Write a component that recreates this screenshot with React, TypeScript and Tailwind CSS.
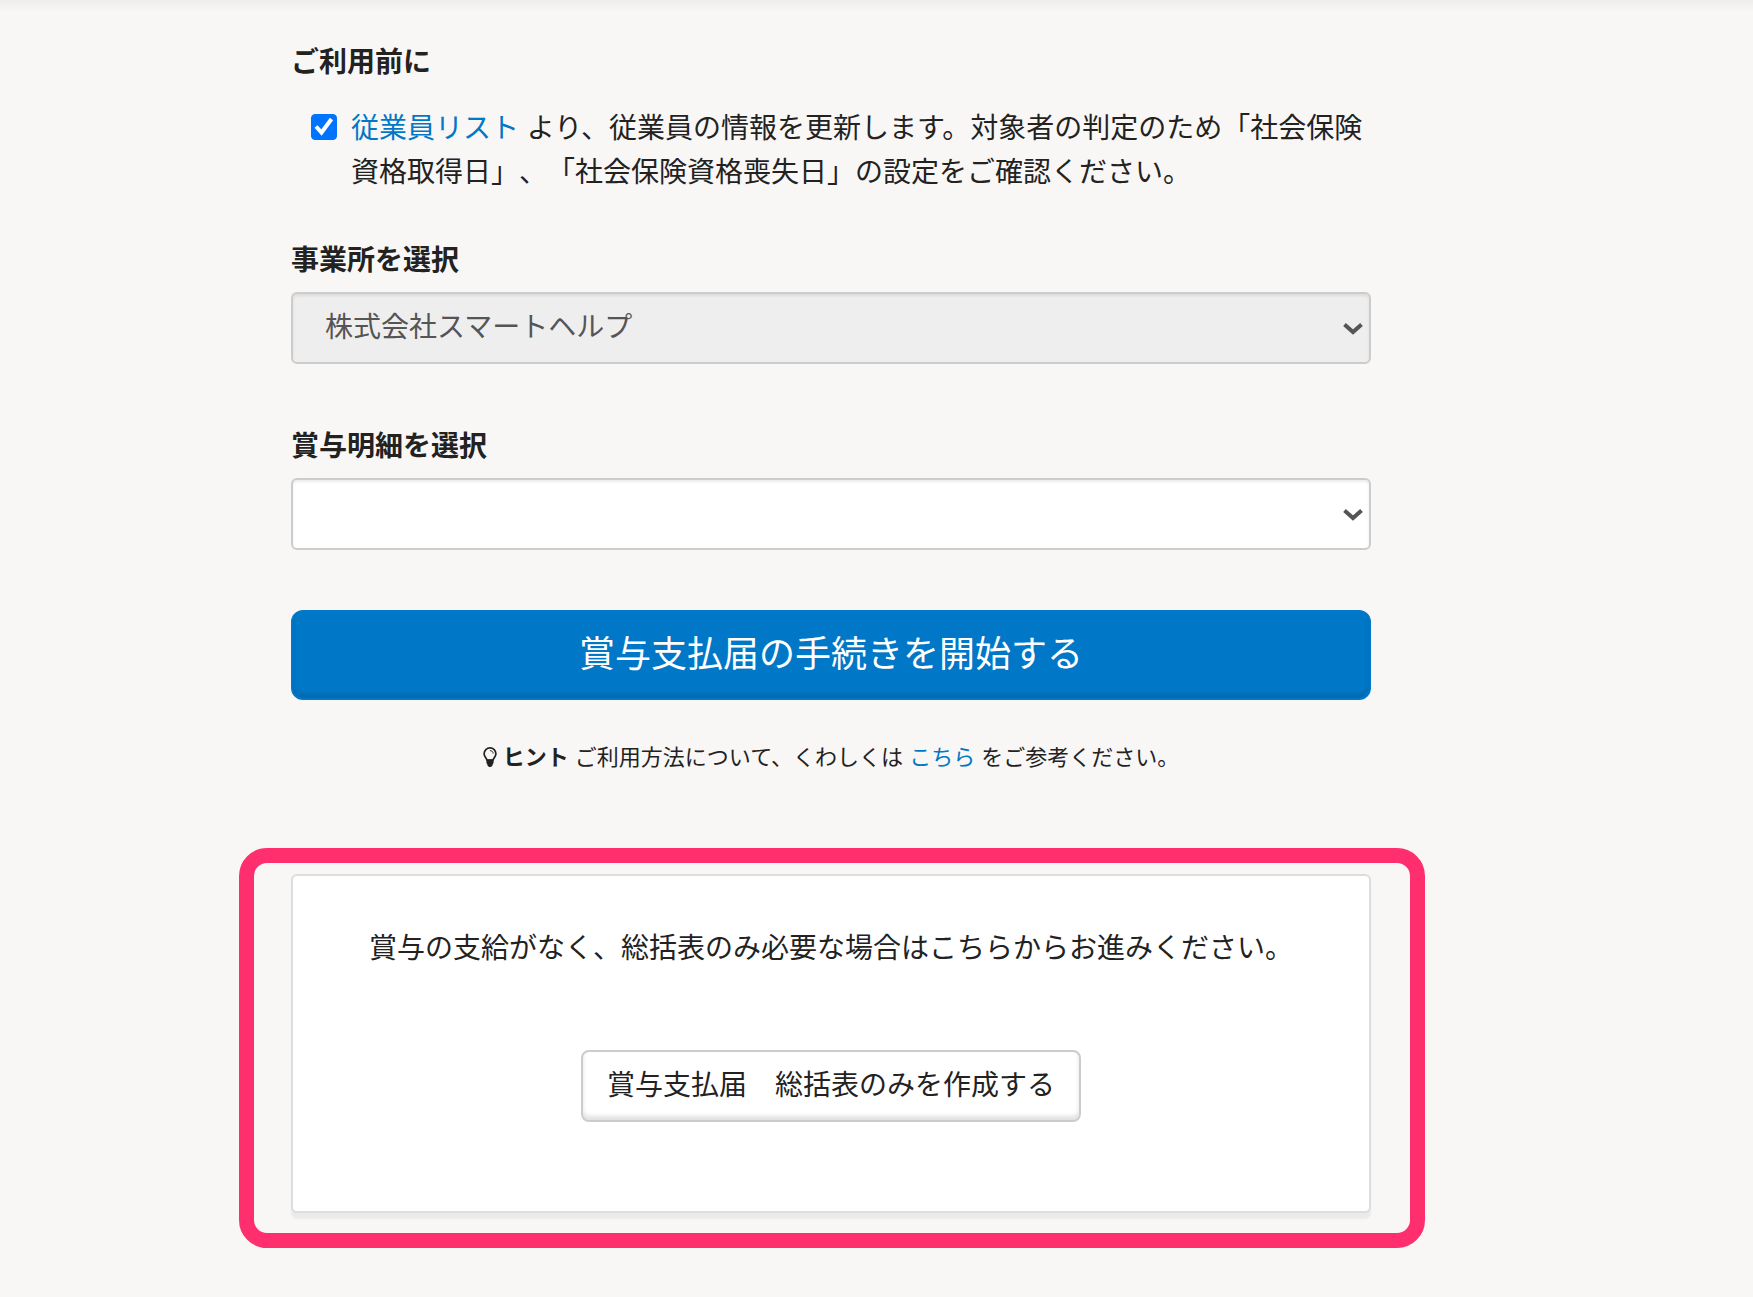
import React, { useState } from "react";

function Chevron() {
  return (
    <svg
      className="pointer-events-none absolute top-1/2 right-2 h-[14px] w-5 -translate-y-1/2"
      viewBox="0 0 20 14"
      fill="none"
      stroke="#555555"
      strokeWidth="4"
      aria-hidden="true"
    >
      <path d="M1.5 3.5 10 11 18.5 3.5" />
    </svg>
  );
}

type SelectFieldProps = {
  id: string;
  label: string;
  options: string[];
  disabled?: boolean;
};

function SelectField({ id, label, options, disabled = false }: SelectFieldProps) {
  return (
    <div className="flex flex-col gap-[9px]">
      <label htmlFor={id} className="font-bold">
        {label}
      </label>
      <div className="relative">
        <select
          id={id}
          disabled={disabled}
          className="h-[72px] w-full appearance-none rounded-md border-2 border-[#cccccc] bg-white px-8 text-[28px] text-[#555555] shadow-[inset_0_2px_3px_rgba(0,0,0,0.08)] disabled:bg-[#eeeeee] disabled:opacity-100"
        >
          {options.map((option) => (
            <option key={option}>{option}</option>
          ))}
        </select>
        <Chevron />
      </div>
    </div>
  );
}

function Lightbulb() {
  return (
    <svg className="mr-[6px] inline-block h-5 w-[14px] align-[-2px]" viewBox="0 0 14 20" aria-hidden="true">
      <path
        d="M7 .9a5.9 5.9 0 0 0-5.9 5.9c0 2.6 2.2 3.9 2.8 6.2h6.2c.6-2.3 2.8-3.6 2.8-6.2A5.9 5.9 0 0 0 7 .9Z"
        fill="none"
        stroke="#23221f"
        strokeWidth="1.7"
      />
      <path d="M7 3.6c1.9 0 3.1 1.2 3.1 3" fill="none" stroke="#23221f" strokeWidth="1" />
      <path d="M3.4 12.6h7.2v3.2c0 .6-.4 1-.9 1.2v1c0 .5-.3.8-.8.9-.3.7-.9 1.1-1.9 1.1s-1.6-.4-1.9-1.1c-.5-.1-.8-.4-.8-.9v-1c-.5-.2-.9-.6-.9-1.2Z" fill="#23221f" />
    </svg>
  );
}

export default function App() {
  const [checked, setChecked] = useState(true);

  return (
    <div
      lang="ja"
      className="min-h-screen bg-[#f8f7f6] font-['Liberation_Sans','Noto_Sans_CJK_JP',sans-serif] text-[28px] leading-[44px] text-[#23221f] [text-spacing-trim:space-all]"
    >
      <div className="h-3 bg-linear-to-b from-[#eeedec] to-[#f8f7f6]" />
      <main className="pt-[29px] pr-[91px] pb-12">
        <div className="mx-auto w-full max-w-[1080px]">
          <h2 className="font-bold">ご利用前に</h2>

          <div className="mt-[22px] flex items-start gap-[14px] pl-5">
            <span className="relative mt-[7px] size-[26px] shrink-0">
              <input
                id="updated"
                type="checkbox"
                checked={checked}
                onChange={(e) => setChecked(e.target.checked)}
                className="peer block size-[26px] appearance-none rounded-[4px] border border-[#767676] bg-white checked:border-[#0073ff] checked:bg-[#0073ff]"
              />
              <svg
                className="pointer-events-none absolute inset-0 hidden size-[26px] peer-checked:block"
                viewBox="0 0 26 26"
                fill="none"
                stroke="white"
                strokeWidth="4"
                aria-hidden="true"
              >
                <path d="M5 12.5 10.5 18.5 20.5 5" />
              </svg>
            </span>
            <label htmlFor="updated">
              <a href="#employees" className="text-[#0077c7]">
                従業員リスト
              </a>{" "}
              より、従業員の情報を更新します。対象者の判定のため「社会保険資格取得日」、「社会保険資格喪失日」の設定をご確認ください。
            </label>
          </div>

          <div className="mt-11 flex flex-col gap-[61px]">
            <SelectField id="office" label="事業所を選択" options={["株式会社スマートヘルプ"]} disabled />
            <SelectField id="bonus" label="賞与明細を選択" options={[""]} />
          </div>

          <button
            type="button"
            className="mt-[60px] h-[90px] w-full rounded-xl border-2 border-[#0077c7] bg-[#0077c7] text-[36px] text-white shadow-[inset_0_-4px_4px_rgba(0,0,0,0.12)]"
          >
            賞与支払届の手続きを開始する
          </button>

          <p className="mt-9 text-center text-[22px]">
            <Lightbulb />
            <strong>ヒント</strong> ご利用方法について、くわしくは{" "}
            <a href="#help" className="text-[#0077c7]">
              こちら
            </a>{" "}
            をご参考ください。
          </p>

          <div className="-mr-[54px] -ml-[52px] mt-[68px] rounded-[28px] border-[15px] border-[#ff2e6c] pt-[11px] pr-[39px] pb-5 pl-[37px]">
            <section className="flex flex-col items-center gap-[79px] rounded-md border-2 border-[#dddddd] bg-white pt-[51px] pb-[89px] shadow-[0_6px_2px_rgba(0,0,0,0.05)]">
              <p>賞与の支給がなく、総括表のみ必要な場合はこちらからお進みください。</p>
              <button
                type="button"
                className="h-[72px] rounded-lg border-2 border-[#cccccc] bg-white px-6 shadow-[inset_0_-4px_4px_rgba(0,0,0,0.12)]"
              >
                賞与支払届　総括表のみを作成する
              </button>
            </section>
          </div>
        </div>
      </main>
    </div>
  );
}
